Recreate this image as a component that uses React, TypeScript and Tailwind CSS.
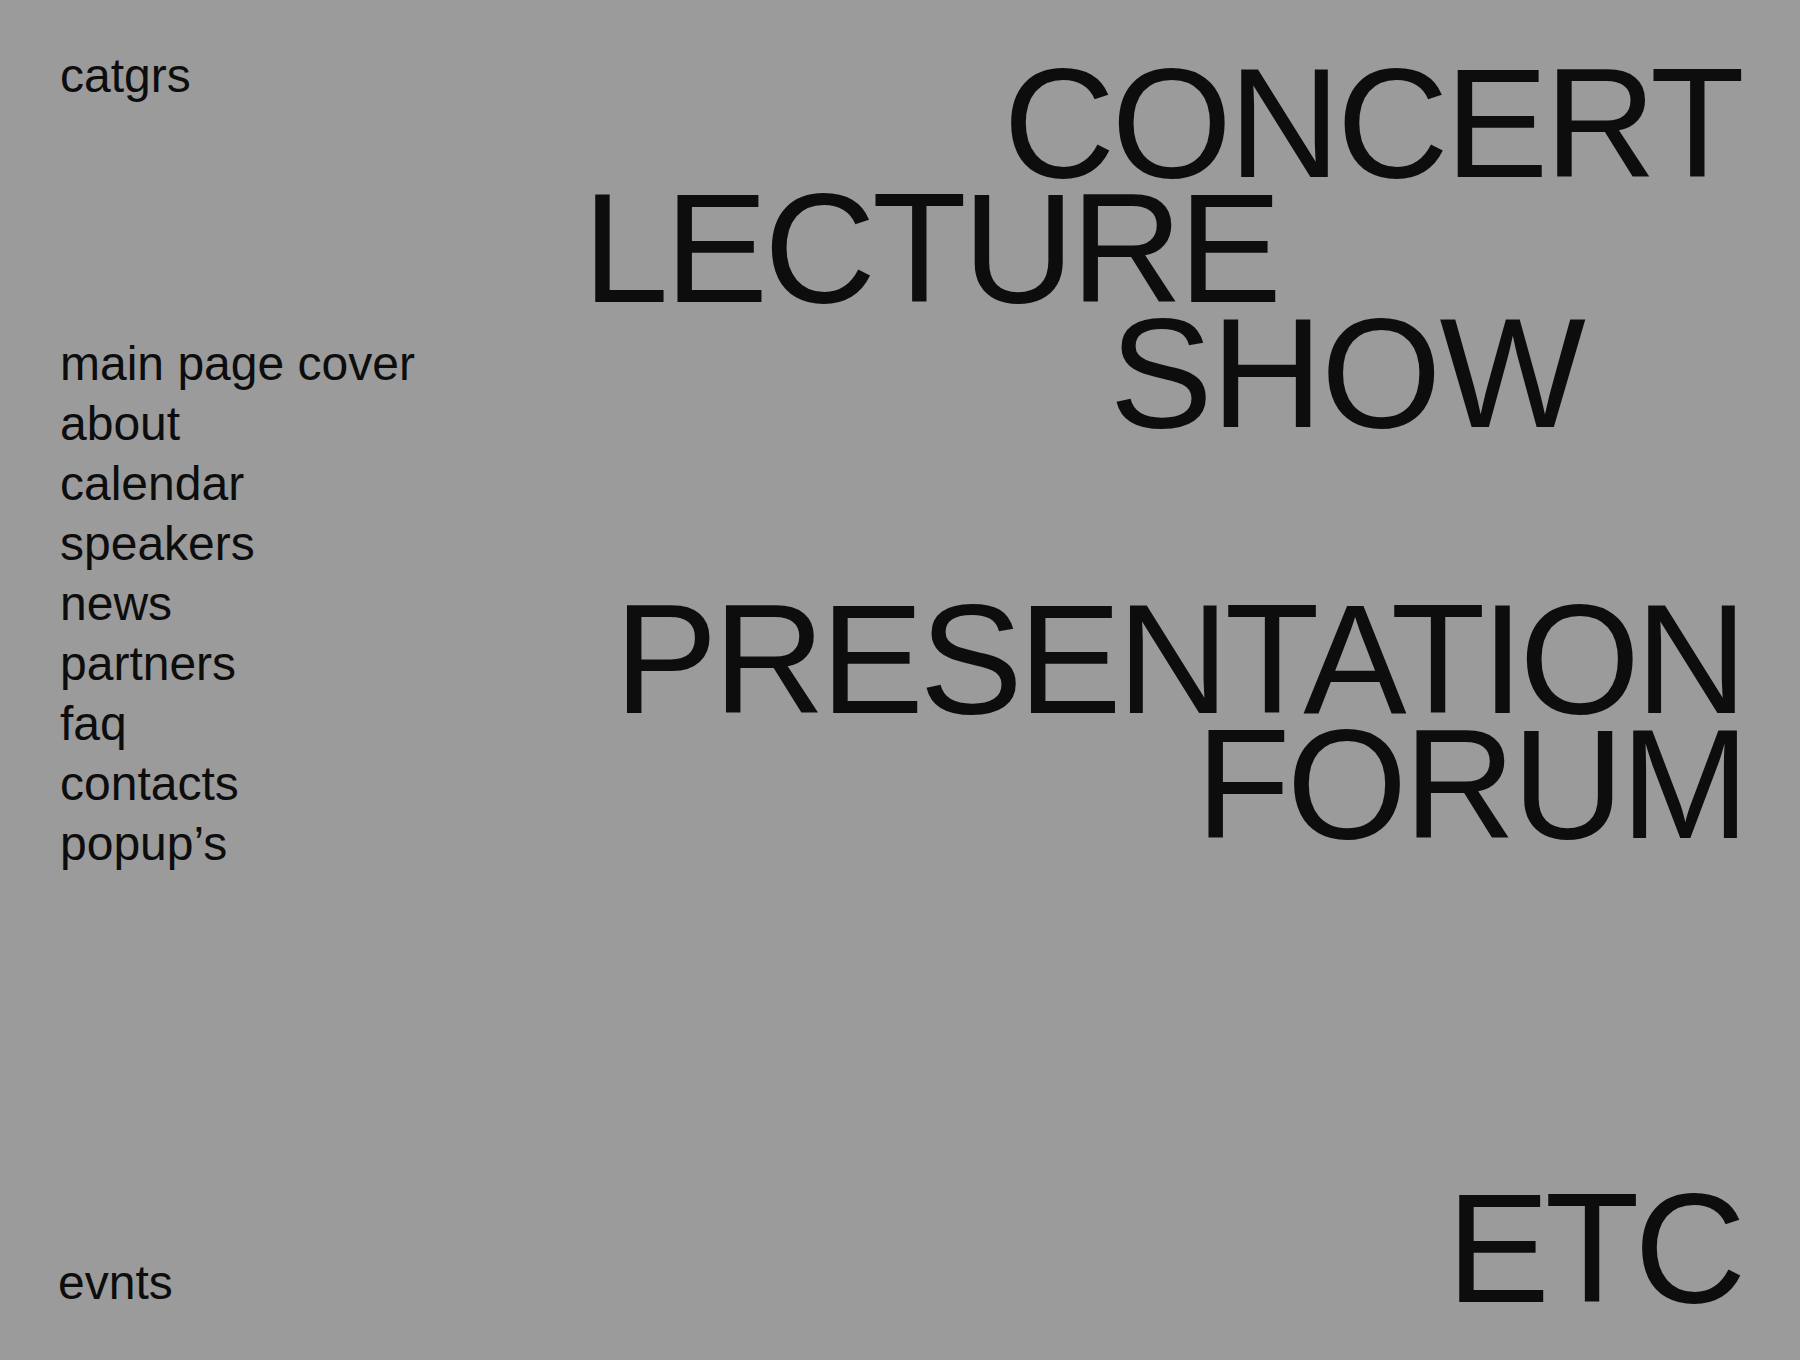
export default function App() {
  const nav = [
    "main page cover",
    "about",
    "calendar",
    "speakers",
    "news",
    "partners",
    "faq",
    "contacts",
    "popup’s",
  ];
  return (
    <div className="flex h-screen w-full justify-between overflow-hidden bg-[#9b9b9b] pl-[60px] pr-[50px] font-['Liberation_Sans',Arial,sans-serif] text-[#0d0d0d]">
      <aside className="flex shrink-0 flex-col justify-between pt-[46px] pb-[47px] text-[48px] leading-[60px]">
        <div>
          <div>catgrs</div>
          <nav className="mt-[228px] flex flex-col">
            {nav.map((n) => (
              <a key={n} className="cursor-pointer whitespace-nowrap">
                {n}
              </a>
            ))}
          </nav>
        </div>
        <div className="-ml-[2px]">evnts</div>
      </aside>
      <main className="flex flex-1 flex-col items-end justify-between whitespace-nowrap pt-[61px] pb-[49px] text-[155px] leading-[125px]">
        <div className="flex flex-col items-end">
          <div className="mr-[9px] tracking-[-3.7px]">CONCERT</div>
          <div className="mr-[472px] tracking-[-4px]">LECTURE</div>
          <div className="mr-[166px] tracking-[-1.9px]">SHOW</div>
          <div className="mt-[161px] mr-[7px] tracking-[-4.5px]">PRESENTATION</div>
          <div className="mr-[4px] tracking-[-3.6px]">FORUM</div>
        </div>
        <div className="mr-[9px] tracking-[-5.2px]">ETC</div>
      </main>
    </div>
  );
}
